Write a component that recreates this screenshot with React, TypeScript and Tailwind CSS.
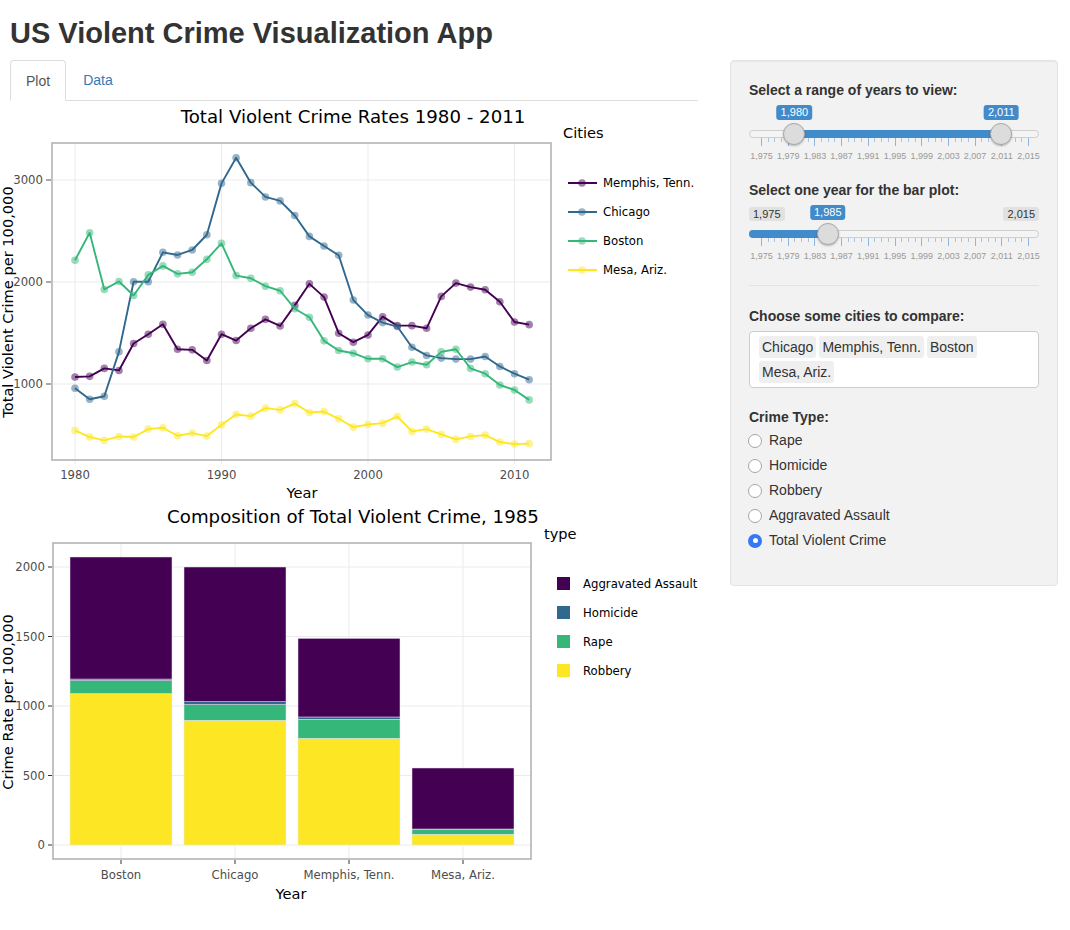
import React from 'react';

const years = Array.from({ length: 32 }, (_, i) => 1980 + i);

const cities = [
    {
        name: 'Memphis, Tenn.',
        color: '#440154',
        data: [1068, 1075, 1153, 1133, 1397, 1488, 1585, 1341, 1335, 1231, 1488, 1426, 1546, 1634, 1569, 1771, 1982, 1852, 1498, 1410, 1481, 1660, 1572, 1572, 1546, 1859, 1989, 1950, 1924, 1806, 1608, 1582],
    },
    {
        name: 'Chicago',
        color: '#31688E',
        data: [958, 850, 880, 1315, 2002, 2002, 2291, 2265, 2314, 2463, 2967, 3218, 2974, 2834, 2795, 2652, 2447, 2353, 2262, 1823, 1676, 1602, 1563, 1361, 1280, 1254, 1244, 1244, 1270, 1172, 1101, 1042],
    },
    {
        name: 'Boston',
        color: '#35B779',
        data: [2213, 2483, 1927, 2005, 1868, 2070, 2158, 2080, 2096, 2223, 2379, 2063, 2037, 1959, 1914, 1738, 1654, 1423, 1328, 1302, 1247, 1247, 1166, 1215, 1189, 1315, 1341, 1153, 1101, 990, 941, 844],
    },
    {
        name: 'Mesa, Ariz.',
        color: '#FDE725',
        data: [545, 480, 447, 486, 480, 558, 571, 493, 519, 489, 600, 701, 685, 763, 746, 808, 720, 730, 659, 577, 603, 616, 681, 535, 558, 506, 457, 486, 499, 431, 411, 415],
    },
];

// stacked from the bottom: robbery, rape, homicide, aggravated assault
const bars = [
    { name: 'Boston', parts: [1089, 93, 12, 878] },
    { name: 'Chicago', parts: [897, 113, 21, 969] },
    { name: 'Memphis, Tenn.', parts: [767, 137, 17, 566] },
    { name: 'Mesa, Ariz.', parts: [77, 33, 5, 439] },
];
const barColors = ['#FDE725', '#35B779', '#31688E', '#440154'];
const barLegend = [
    { name: 'Aggravated Assault', color: '#440154' },
    { name: 'Homicide', color: '#31688E' },
    { name: 'Rape', color: '#35B779' },
    { name: 'Robbery', color: '#FDE725' },
];

const chartFont = "'DejaVu Sans', Verdana, sans-serif";

const lx = (y: number) => 75 + (y - 1980) * 14.65;
const ly = (v: number) => 384 - (v - 1000) * 0.102;

const LineChart = () => (
    <svg width={700} height={398} viewBox="0 102 700 398" className="block" fontFamily={chartFont}>
        <text x={353} y={123} fontSize={18.2} textAnchor="middle" fill="#000">
            Total Violent Crime Rates 1980 - 2011
        </text>
        <rect x={52} y={143} width={499} height={317} fill="#fff" />
        {[1000, 2000, 3000].map((v) => (
            <line key={v} x1={52} x2={551} y1={ly(v)} y2={ly(v)} stroke="#ebebeb" strokeWidth={1} />
        ))}
        {[1980, 1990, 2000, 2010].map((y) => (
            <line key={y} x1={lx(y)} x2={lx(y)} y1={143} y2={464} stroke="#ebebeb" strokeWidth={1} />
        ))}
        {cities.map((c) => (
            <g key={c.name}>
                <polyline
                    points={c.data.map((v, i) => `${lx(years[i])},${ly(v)}`).join(' ')}
                    fill="none"
                    stroke={c.color}
                    strokeWidth={1.9}
                    strokeLinejoin="round"
                />
                {c.data.map((v, i) => (
                    <circle key={i} cx={lx(years[i])} cy={ly(v)} r={3.8} fill={c.color} fillOpacity={0.5} />
                ))}
            </g>
        ))}
        <rect x={52} y={143} width={499} height={317} fill="none" stroke="#b3b3b3" strokeWidth={1.6} />
        {[1000, 2000, 3000].map((v) => (
            <g key={v}>
                <line x1={46} x2={51} y1={ly(v)} y2={ly(v)} stroke="#555" strokeWidth={1} />
                <text x={43} y={ly(v) + 4} fontSize={11.7} textAnchor="end" fill="#4d4d4d">
                    {v}
                </text>
            </g>
        ))}
        {[1980, 1990, 2000, 2010].map((y) => (
            <text key={y} x={lx(y)} y={479} fontSize={11.7} textAnchor="middle" fill="#4d4d4d">
                {y}
            </text>
        ))}
        <text x={302} y={498} fontSize={14.6} textAnchor="middle" fill="#000">
            Year
        </text>
        <text x={13} y={302} fontSize={14.6} textAnchor="middle" fill="#000" transform="rotate(-90 13 302)">
            Total Violent Crime per 100,000
        </text>
        <text x={563} y={138} fontSize={14.6} fill="#000">
            Cities
        </text>
        {cities.map((c, i) => (
            <g key={c.name}>
                <line x1={568} x2={597} y1={183 + i * 29} y2={183 + i * 29} stroke={c.color} strokeWidth={2} />
                <circle cx={582} cy={183 + i * 29} r={3.8} fill={c.color} fillOpacity={0.5} />
                <text x={603} y={187 + i * 29} fontSize={11.7} fill="#000">
                    {c.name}
                </text>
            </g>
        ))}
    </svg>
);

const by = (v: number) => 845 - v * 0.139;

const BarChart = () => (
    <svg width={700} height={410} viewBox="0 500 700 410" className="block" fontFamily={chartFont}>
        <text x={353} y={523} fontSize={18.2} textAnchor="middle" fill="#000">
            Composition of Total Violent Crime, 1985
        </text>
        <rect x={53} y={543} width={478} height={316} fill="#fff" />
        {[0, 500, 1000, 1500, 2000].map((v) => (
            <line key={v} x1={53} x2={531} y1={by(v)} y2={by(v)} stroke="#ebebeb" strokeWidth={1} />
        ))}
        {bars.map((b, i) => (
            <line key={b.name} x1={121 + i * 114} x2={121 + i * 114} y1={543} y2={859} stroke="#ebebeb" strokeWidth={1} />
        ))}
        {bars.map((b, i) => {
            let acc = 0;
            return (
                <g key={b.name}>
                    {b.parts.map((p, j) => {
                        const top = by(acc + p);
                        const bottom = by(acc);
                        acc += p;
                        return (
                            <rect
                                key={j}
                                x={70 + i * 114}
                                y={top}
                                width={102}
                                height={bottom - top}
                                fill={barColors[j]}
                                stroke="#ece6f0"
                                strokeWidth={0.5}
                            />
                        );
                    })}
                </g>
            );
        })}
        <rect x={53} y={543} width={478} height={316} fill="none" stroke="#b3b3b3" strokeWidth={1.6} />
        {[0, 500, 1000, 1500, 2000].map((v) => (
            <g key={v}>
                <line x1={48} x2={52} y1={by(v)} y2={by(v)} stroke="#333" strokeWidth={1} />
                <text x={45} y={by(v) + 4} fontSize={11.7} textAnchor="end" fill="#4d4d4d">
                    {v}
                </text>
            </g>
        ))}
        {bars.map((b, i) => (
            <g key={b.name}>
                <line x1={121 + i * 114} x2={121 + i * 114} y1={860} y2={864} stroke="#333" strokeWidth={1} />
                <text x={121 + i * 114} y={879} fontSize={11.7} textAnchor="middle" fill="#4d4d4d">
                    {b.name}
                </text>
            </g>
        ))}
        <text x={291} y={899} fontSize={14.6} textAnchor="middle" fill="#000">
            Year
        </text>
        <text x={13} y={702} fontSize={14.6} textAnchor="middle" fill="#000" transform="rotate(-90 13 702)">
            Crime Rate per 100,000
        </text>
        <text x={544} y={539} fontSize={14.6} fill="#000">
            type
        </text>
        {barLegend.map((l, i) => (
            <g key={l.name}>
                <rect x={557} y={577 + i * 29} width={13} height={13} fill={l.color} />
                <text x={583} y={588 + i * 29} fontSize={11.7} fill="#000">
                    {l.name}
                </text>
            </g>
        ))}
    </svg>
);

const gridYears = Array.from({ length: 41 }, (_, i) => 1975 + i);
const sx = (y: number) => 12 + (y - 1975) * 6.675;
const fmt = (y: number) => `${Math.floor(y / 1000)},${String(y % 1000).padStart(3, '0')}`;

const YearSlider = ({ from, to, single }: { from: number; to?: number; single?: boolean }) => {
    const barLeft = single ? 0 : sx(from);
    const barRight = single ? sx(from) : sx(to ?? from);
    const handles = single ? [from] : [from, to ?? from];
    return (
        <div className="relative h-[64px] w-[290px]">
            {single && (
                <>
                    <span className="absolute left-0 top-[6px] rounded-[3px] bg-[#e1e1e1] px-[4px] text-[11px] leading-[14px] text-[#333]">
                        1,975
                    </span>
                    <span className="absolute right-0 top-[6px] rounded-[3px] bg-[#e1e1e1] px-[4px] text-[11px] leading-[14px] text-[#333]">
                        2,015
                    </span>
                </>
            )}
            <div className="absolute left-0 top-[29px] h-[8px] w-[290px] rounded-full border border-[#cfcfcf] bg-[#f4f4f4]" />
            <div
                className={`absolute top-[29px] h-[8px] bg-[#428bca] ${single ? 'rounded-l-full' : ''}`}
                style={{ left: barLeft, width: barRight - barLeft }}
            />
            {gridYears.map((y) => {
                const major = (y - 1975) % 4 === 0;
                return (
                    <div
                        key={y}
                        className={`absolute top-[37px] w-px ${major ? 'h-[8px] bg-[#8fb6de]' : 'h-[4px] bg-[#a9c4e0]'}`}
                        style={{ left: sx(y) }}
                    />
                );
            })}
            {gridYears
                .filter((y) => (y - 1975) % 4 === 0)
                .map((y) => (
                    <span
                        key={y}
                        className="absolute top-[49px] w-[30px] -translate-x-1/2 text-center text-[9px] leading-[12px] text-[#999]"
                        style={{ left: sx(y) + 0.5 }}
                    >
                        {fmt(y)}
                    </span>
                ))}
            {handles.map((h) => (
                <React.Fragment key={h}>
                    <span
                        className="absolute top-[4px] -translate-x-1/2 rounded-[3px] bg-[#428bca] px-[4px] text-[11px] leading-[15px] text-white"
                        style={{ left: sx(h) }}
                    >
                        {fmt(h)}
                    </span>
                    <div
                        className="absolute top-[22px] h-[22px] w-[22px] -translate-x-1/2 rounded-full border border-[#aaa] bg-[#dcdcdc] shadow-[0_1px_2px_rgba(0,0,0,0.25)]"
                        style={{ left: sx(h) }}
                    />
                </React.Fragment>
            ))}
        </div>
    );
};

const crimeTypes = ['Rape', 'Homicide', 'Robbery', 'Aggravated Assault', 'Total Violent Crime'];
const chosen = ['Chicago', 'Memphis, Tenn.', 'Boston', 'Mesa, Ariz.'];

const Sidebar = () => (
    <div className="w-[328px] rounded-[4px] border border-[#e3e3e3] bg-[#f2f2f2] px-[18px] pb-[32px] pt-[19px] shadow-[inset_0_1px_1px_rgba(0,0,0,0.05)]">
        <div className="text-[14px] font-bold leading-[20px]">Select a range of years to view:</div>
        <div className="mt-[1px]">
            <YearSlider from={1980} to={2011} />
        </div>
        <div className="mt-[15px] text-[14px] font-bold leading-[20px]">Select one year for the bar plot:</div>
        <div className="mt-[1px]">
            <YearSlider from={1985} single />
        </div>
        <hr className="mt-[20px] border-t border-[#e3e3e3]" />
        <div className="mt-[20px] text-[14px] font-bold leading-[20px]">Choose some cities to compare:</div>
        <div className="mt-[5px] flex h-[57px] flex-wrap content-start gap-[3px] rounded-[4px] border border-[#ccc] bg-white pl-[9px] pr-[8px] pt-[4px]">
            {chosen.map((c) => (
                <span key={c} className="h-[22px] rounded-[3px] bg-[#efefef] px-[3px] text-[14px] leading-[22px] text-[#333]">
                    {c}
                </span>
            ))}
        </div>
        <div className="mt-[19px] text-[14px] font-bold leading-[20px]">Crime Type:</div>
        <div className="mt-[1px] flex flex-col">
            {crimeTypes.map((t) => {
                const on = t === 'Total Violent Crime';
                return (
                    <div key={t} className="flex h-[25px] items-center">
                        {on ? (
                            <span className="ml-[-1px] flex h-[14px] w-[14px] items-center justify-center rounded-full bg-[#3478f6]">
                                <span className="h-[5px] w-[5px] rounded-full bg-white" />
                            </span>
                        ) : (
                            <span className="ml-[-1px] h-[14px] w-[14px] rounded-full border border-[#a5a5a5] bg-white" />
                        )}
                        <span className="ml-[7px] text-[14px] text-[#333]">{t}</span>
                    </div>
                );
            })}
        </div>
    </div>
);

const App = () => (
    <div className="min-h-[930px] w-[1070px] bg-white font-['Liberation_Sans',Arial,sans-serif] text-[#333]">
        <h2 className="mb-[10px] pl-[10px] pt-[17px] text-[29px] font-bold leading-[33px] text-[#333]">
            US Violent Crime Visualization App
        </h2>
        <div className="flex">
            <div className="w-[700px]">
                <ul className="ml-[10px] flex h-[41px] w-[688px] border-b border-[#ddd] text-[14px] leading-[20px]">
                    <li className="-mb-px rounded-t-[4px] border border-[#ddd] border-b-white bg-white px-[15px] py-[10px] text-[#555]">
                        Plot
                    </li>
                    <li className="ml-[2px] px-[15px] py-[10px] text-[#337ab7]">Data</li>
                </ul>
                <div className="mt-px">
                    <LineChart />
                    <BarChart />
                </div>
            </div>
            <div className="ml-[30px]">
                <Sidebar />
            </div>
        </div>
    </div>
);

export default App;
